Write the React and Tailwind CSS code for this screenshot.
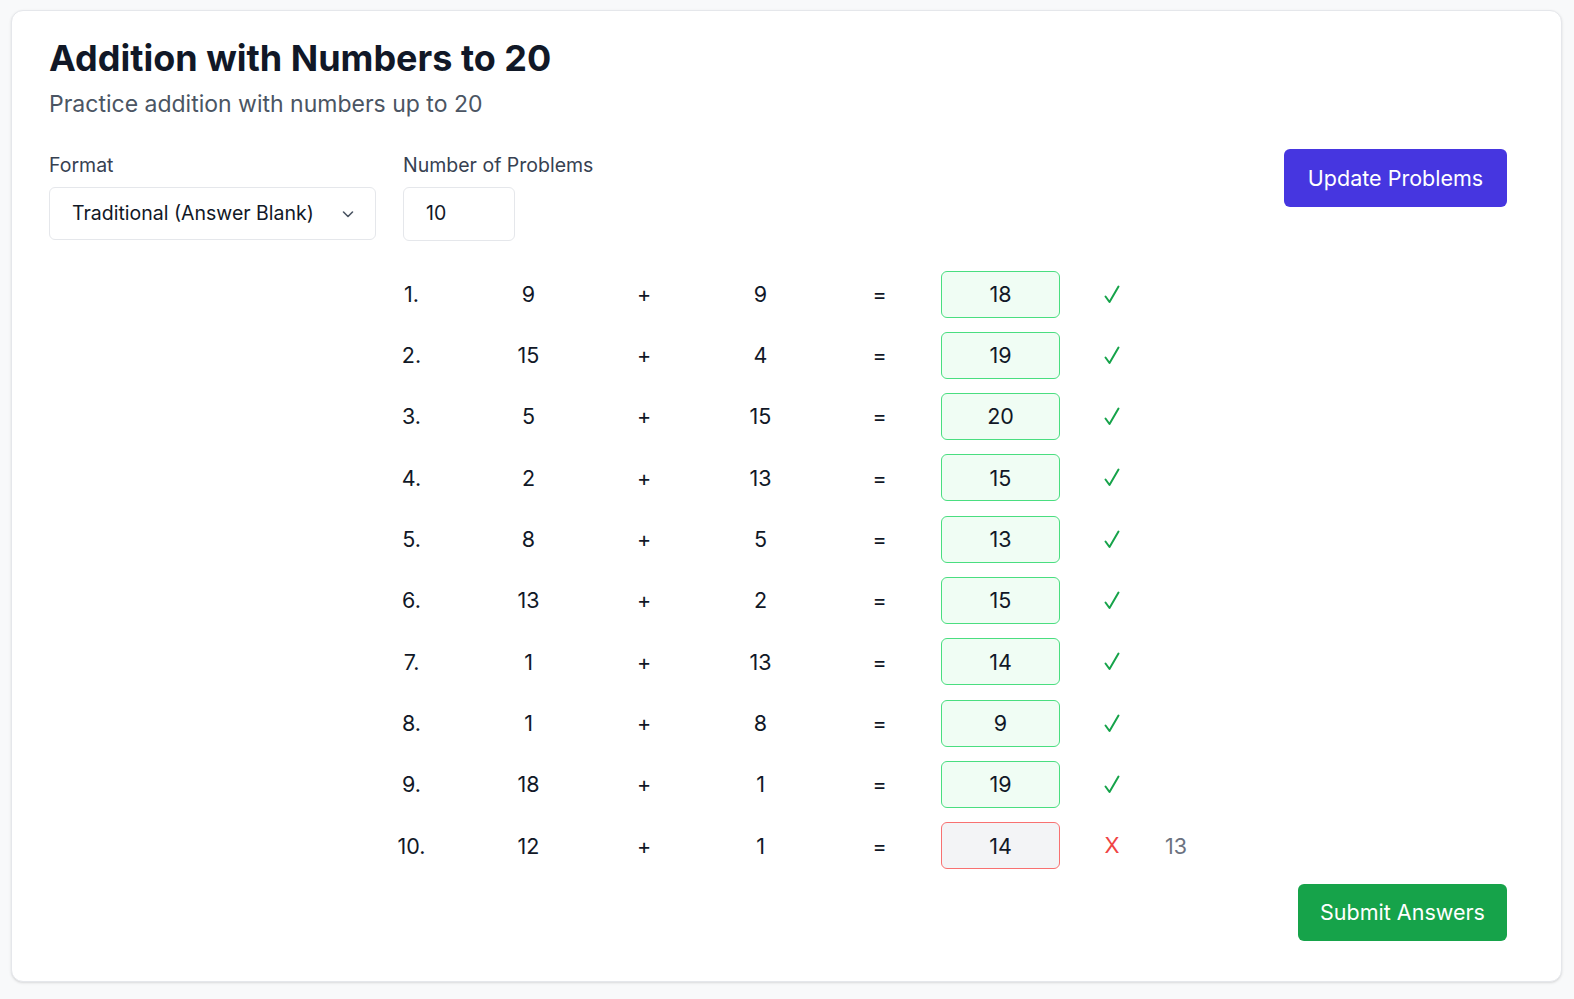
const problems = [
  { a: 9, b: 9, answer: 18 },
  { a: 15, b: 4, answer: 19 },
  { a: 5, b: 15, answer: 20 },
  { a: 2, b: 13, answer: 15 },
  { a: 8, b: 5, answer: 13 },
  { a: 13, b: 2, answer: 15 },
  { a: 1, b: 13, answer: 14 },
  { a: 1, b: 8, answer: 9 },
  { a: 18, b: 1, answer: 19 },
  { a: 12, b: 1, answer: 14 },
];

function Check() {
  return (
    <svg width="16" height="19" viewBox="0 0 16 19" fill="none" className="inline-block">
      <path d="M1.5 11.5 L5.5 17 L14.5 1.5" stroke="#16a34a" strokeWidth="2" strokeLinecap="round" strokeLinejoin="round" />
    </svg>
  );
}

function Chevron() {
  return (
    <svg width="14" height="14" viewBox="0 0 14 14" fill="none">
      <path d="M2.5 5 L7 9.5 L11.5 5" stroke="#4b5563" strokeWidth="1.6" strokeLinecap="round" strokeLinejoin="round" />
    </svg>
  );
}

function ProblemRow({ index, a, b, answer }) {
  const correct = a + b === answer;
  return (
    <div className="flex items-center h-[46px] text-[21.5px] text-[#111827]">
      <div className="w-[117px] text-center">{index}.</div>
      <div className="w-[117px] text-center">{a}</div>
      <div className="w-[114px] text-center">+</div>
      <div className="w-[119px] text-center">{b}</div>
      <div className="w-[119px] text-center">=</div>
      <div
        className={
          correct
            ? 'ml-[2px] w-[119px] h-[47px] flex items-center justify-center rounded-md border border-[#4ade80] bg-[#f0fdf4]'
            : 'ml-[2px] w-[119px] h-[47px] flex items-center justify-center rounded-md border border-[#f87171] bg-[#f3f4f6]'
        }
      >
        {answer}
      </div>
      <div className="ml-[18px] w-[68px] flex justify-center">
        {correct ? <Check /> : <span className="text-[#ef4444] text-[22px]">X</span>}
      </div>
      {!correct && <div className="w-[60px] text-center text-[#6b7280]">{a + b}</div>}
    </div>
  );
}

export default function App() {
  return (
    <div className="min-h-screen bg-[#f8f9fa] pt-[10px] pl-[11px]" style={{ fontFamily: 'Inter, "Noto Sans", sans-serif' }}>
      <div className="w-[1551px] h-[972px] bg-white rounded-xl border border-[#e5e7eb] shadow-sm pl-[37px] pr-[54px] pt-[27px]">
        <h1 className="text-[36px] leading-[40px] font-bold text-[#111827]">Addition with Numbers to 20</h1>
        <p className="mt-3 text-[23px] leading-[28px] text-[#4b5563]">Practice addition with numbers up to 20</p>

        <div className="mt-[35px] flex justify-between items-start">
          <div className="flex gap-[27px]">
            <div>
              <label className="block text-[19.5px] leading-[24px] text-[#374151]">Format</label>
              <div className="mt-[10px] w-[327px] h-[53px] flex items-center justify-between pl-[22px] pr-[20px] rounded-md border border-[#e5e7eb] text-[19.5px] text-[#111827]">
                <span>Traditional (Answer Blank)</span>
                <Chevron />
              </div>
            </div>
            <div>
              <label className="block text-[19.5px] leading-[24px] text-[#374151]">Number of Problems</label>
              <div className="mt-[10px] w-[112px] h-[54px] flex items-center pl-[22px] rounded-md border border-[#e5e7eb] text-[19.5px] text-[#111827]">
                10
              </div>
            </div>
          </div>
          <button className="-mt-[4px] w-[223px] h-[58px] rounded-md bg-[#4636e0] text-white text-[21.5px]">
            Update Problems
          </button>
        </div>

        <div className="mt-[30px] ml-[304px] flex flex-col gap-[15.3px]">
          {problems.map((p, i) => (
            <ProblemRow key={i} index={i + 1} {...p} />
          ))}
        </div>

        <div className="mt-[15px] flex justify-end">
          <button className="w-[209px] h-[57px] rounded-md bg-[#16a34a] text-white text-[21.5px]">
            Submit Answers
          </button>
        </div>
      </div>
    </div>
  );
}
